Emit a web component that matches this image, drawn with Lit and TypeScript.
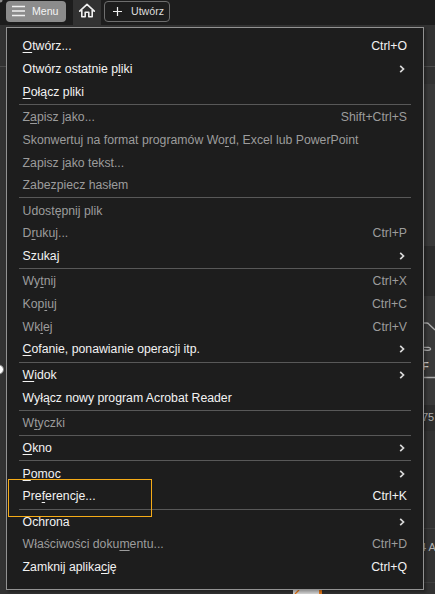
import { LitElement, html, css, svg } from "lit";
import { customElement } from "lit/decorators.js";
import { classMap } from "lit/directives/class-map.js";

interface Item {
  /** Label; the accelerator letter is preceded by "&". */
  label: string;
  keys?: string;
  sub?: boolean;
  off?: boolean;
}

const GROUPS: Item[][] = [
  [
    { label: "&Otwórz...", keys: "Ctrl+O" },
    { label: "Otwórz ostatnie p&liki", sub: true },
    { label: "&Połącz pliki" },
  ],
  [
    { label: "Z&apisz jako...", keys: "Shift+Ctrl+S", off: true },
    { label: "Skonwertuj na format programów Wo&rd, Excel lub PowerPoint", off: true },
    { label: "Zapisz jako tekst...", off: true },
    { label: "Zabezpiecz hasłem", off: true },
  ],
  [
    { label: "Udostępnij plik", off: true },
    { label: "D&rukuj...", keys: "Ctrl+P", off: true },
    { label: "Szukaj", sub: true },
  ],
  [
    { label: "Wy&tnij", keys: "Ctrl+X", off: true },
    { label: "Kop&iuj", keys: "Ctrl+C", off: true },
    { label: "Wk&lej", keys: "Ctrl+V", off: true },
    { label: "&Cofanie, ponawianie operacji itp.", sub: true },
  ],
  [{ label: "&Widok", sub: true }, { label: "Wyłącz nowy program Acrobat Reader" }],
  [{ label: "W&tyczki", off: true }],
  [{ label: "&Okno", sub: true }],
  [{ label: "&Pomoc", sub: true }, { label: "Pre&ferencje...", keys: "Ctrl+K" }],
  [
    { label: "Ochrona", sub: true },
    { label: "Właściwości doku&mentu...", keys: "Ctrl+D", off: true },
    { label: "Zamknij aplika&cję", keys: "Ctrl+Q" },
  ],
];

@customElement("app-menu")
class AppMenu extends LitElement {
  static styles = css`
    :host {
      display: block;
      box-sizing: border-box;
      width: 418px;
      height: 563px;
      padding: 7.1px 12px 0 12px;
      background: #1d1d1d;
      border: 1px solid #929292;
      box-shadow: 2px 2px 3px rgba(0, 0, 0, 0.35);
    }
    .row {
      display: flex;
      justify-content: space-between;
      align-items: center;
      height: 22.7px;
      padding: 0 4px 0 3.6px;
      color: #f2f2f2;
      white-space: pre;
    }
    .off {
      color: #9c9c9c;
    }
    .key {
      text-decoration: underline;
      text-decoration-thickness: 1px;
      text-underline-offset: 2px;
      text-decoration-skip-ink: none;
    }
    .sep {
      height: 1px;
      margin: 0.85px 0;
      background: #585858;
    }
    .arrow {
      width: 6px;
      height: 8px;
      margin-right: 2px;
      fill: none;
      stroke: #d8d8d8;
      stroke-width: 1.7;
    }
  `;

  private label(text: string) {
    const i = text.indexOf("&");
    if (i < 0) return html`<span>${text}</span>`;
    return html`<span>${text.slice(0, i)}<span class="key">${text[i + 1]}</span>${text.slice(i + 2)}</span>`;
  }

  render() {
    return GROUPS.map(
      (group, g) => html`${g ? html`<div class="sep"></div>` : ""}${group.map(
        (item) => html`<div class=${classMap({ row: true, off: !!item.off })}>
          ${this.label(item.label)}
          ${item.keys ? html`<span>${item.keys}</span>` : ""}
          ${item.sub ? html`<svg class="arrow" viewBox="0 0 6 8"><path d="M1.2 .8L4.5 4L1.2 7.2" /></svg>` : ""}
        </div>`
      )}`
    );
  }
}

@customElement("app-root")
class AppRoot extends LitElement {
  static styles = css`
    :host {
      display: block;
      position: relative;
      width: 435px;
      height: 594px;
      overflow: hidden;
      background: #323232;
      font: 12.28px/16px "Liberation Sans", Arial, sans-serif;
    }
    .bar {
      display: flex;
      height: 25px;
      background: #1d1d1d;
    }
    .btn {
      display: flex;
      align-items: center;
      box-sizing: border-box;
      height: 21px;
      margin-top: 1px;
      border-radius: 4px;
    }
    .menu {
      width: 60px;
      margin-left: 6px;
      padding: 0 0 1px 6px;
      gap: 7px;
      background: #8c8c8c;
      color: #f4f4f4;
      font-size: 10.6px;
    }
    .home {
      display: flex;
      justify-content: center;
      width: 28px;
      margin-left: 7px;
      background: #323232;
    }
    .create {
      width: 66px;
      margin-left: 3px;
      padding: 0 0 1px 8px;
      gap: 9px;
      border: 1px solid #6e6e6e;
      color: #dedede;
      font-size: 10.6px;
    }
    .line {
      fill: none;
      stroke: #f0f0f0;
    }
    .back {
      position: absolute;
      left: 0;
      top: 0;
    }
    .small {
      font-size: 11px;
      fill: #b0b0b0;
    }
    .pdf {
      font-size: 11px;
      font-weight: bold;
      fill: #d0d0d0;
    }
    app-menu {
      position: absolute;
      left: 6px;
      top: 27px;
    }
    .mark {
      position: absolute;
      box-sizing: border-box;
      left: 8px;
      top: 479px;
      width: 144px;
      height: 38px;
      border: 1px solid #f5ab17;
    }
  `;

  private backdrop() {
    return svg`
      <path d="M0 66.5H435" stroke="#4c4c4c" />
      <rect x="418" y="84" width="17" height="162" fill="#393939" />
      <rect x="418" y="246" width="17" height="50" fill="#2c2c2c" />
      <rect x="418" y="296" width="17" height="109" fill="#393939" />
      <rect x="418" y="405" width="17" height="26" fill="#2d2d2d" />
      <path d="M418 528.5H435M418 582.5H435" stroke="#3f3f3f" />
      <path d="M420 323H426.5Q428 323 429 324.2L435 330M418 377.5H435" fill="none" stroke="#aaa" stroke-width="1.3" />
      <path d="M422 347.3H428.5Q431 347.8 430.5 349.5Q429 351 424 350" fill="none" stroke="#aaa" stroke-width="1.3" />
      <text class="pdf" x="422" y="370">F</text>
      <text class="small" x="422" y="421">75</text>
      <text class="small" x="420" y="551">4 A</text>
      <circle cx="-1" cy="369.5" r="4.5" fill="#fff" stroke="#777" />
      <rect x="293" y="590" width="28" height="4" fill="#d6d6d6" />
      <path d="M319 590h3v4h-3z" fill="#e87817" />
      <path d="M295 594l4-4" stroke="#e87817" stroke-width="1.3" />
      <circle cx="0" cy="0" r="2.5" fill="#8c8c8c" />`;
  }

  render() {
    return html`
      <div class="bar">
        <div class="btn menu">
          <svg class="line" width="13" height="12" stroke-width="1.3"><path d="M0 1.5H13M0 6H13M0 10.5H13" /></svg>
          <span>Menu</span>
        </div>
        <div class="home">
          <svg class="line" width="18" height="22" stroke-width="1.6" stroke-linejoin="round" stroke-linecap="round">
            <path d="M1.7 11.2L9 4.3L16.3 11.2M3.8 10V16.7H7.2V12.3H10.8V16.7H14.2V10" />
          </svg>
        </div>
        <div class="btn create">
          <svg class="line" width="9" height="9" stroke-width="1.2"><path d="M0 4.5H9M4.5 0V9" /></svg>
          <span>Utwórz</span>
        </div>
      </div>
      <svg class="back" width="435" height="594">${this.backdrop()}</svg>
      <app-menu></app-menu>
      <div class="mark"></div>
    `;
  }
}
